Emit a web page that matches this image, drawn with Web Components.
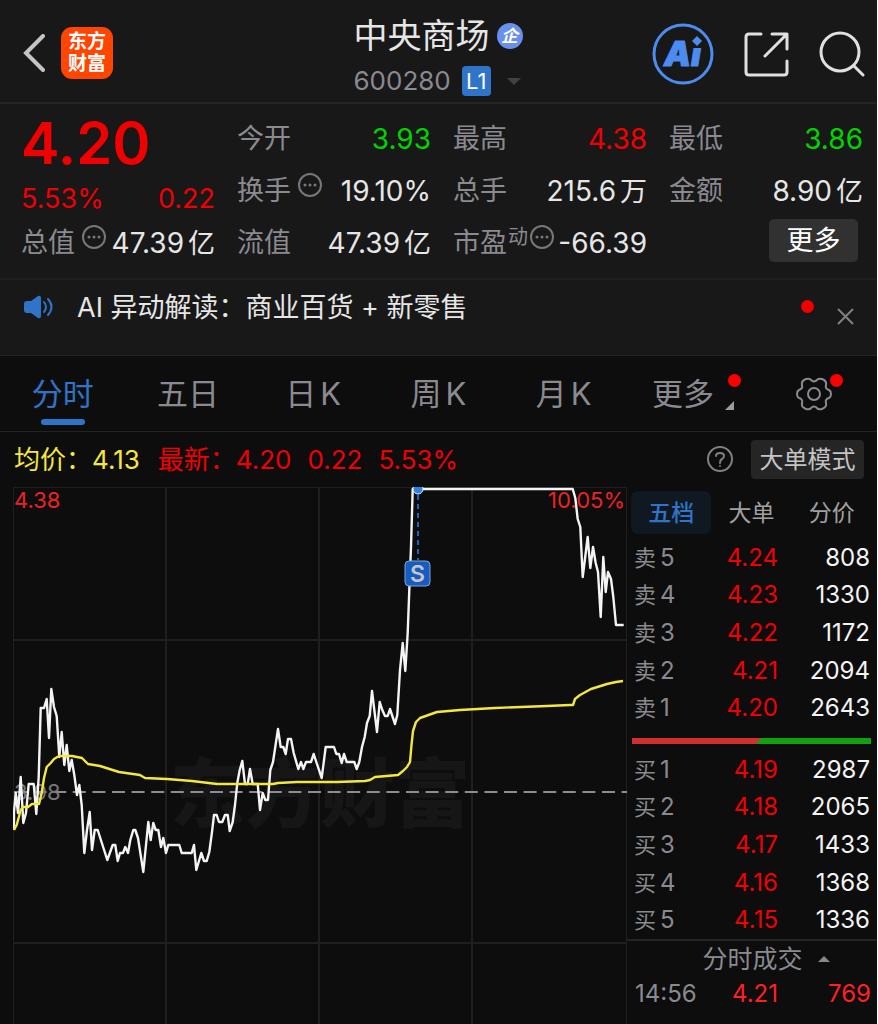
<!DOCTYPE html>
<html lang="zh-CN">
<head>
<meta charset="utf-8">
<meta name="viewport" content="width=device-width, initial-scale=1">
<title>中央商场 600280</title>
<style>
	:root {
		--panel: #181818;
		--page: #0d0d0d;
		--line: #242424;
		--label: #8a8a90;
		--text: #e6e6e6;
		--up: #f00000;
		--down: #00d400;
		--blue: #2f74c8;
	}

	body {
		margin: 0;
		background: var(--page);
		color: var(--text);
		font-family: Inter, "Noto Sans CJK SC", sans-serif;
	}
</style>
</head>
<body>
<stock-app></stock-app>

<script>
const BASE = /*html*/`
<style>
	* {
		box-sizing: border-box;
	}
	button {
		font: inherit;
		color: inherit;
		background: none;
		border: 0;
		padding: 0;
		cursor: pointer;
		white-space: nowrap;
	}
	svg {
		display: block;
		flex: none;
	}
	.up { color: var(--up); }
	.down { color: var(--down); }
	.unit { margin-left: 4px; }
</style>`

class BaseElement extends HTMLElement {
	constructor() {
		super()
		this.attachShadow({mode:'open'})
		this.shadowRoot.innerHTML = BASE + this.render()
	}
}

customElements.define('stock-header', class extends BaseElement {
	render() {
		return /*html*/`
<style>
	:host {
		display: grid;
		grid-template-columns: 1fr auto 1fr;
		align-items: center;
		height: 104px;
		padding: 0 12px 0 23px;
		background: var(--panel);
		border-bottom: 2px solid var(--line);
	}
	.left, .right, .row {
		display: flex;
		align-items: center;
	}
	.left { gap: 16px; padding-top: 4px; }
	.right { gap: 30px; justify-content: flex-end; padding-top: 6px; }
	.logo {
		display: grid;
		align-content: center;
		width: 52px;
		height: 52px;
		border-radius: 11px;
		background: #ff4500;
		color: #fff;
		font-size: 19px;
		line-height: 22px;
		font-weight: 700;
		text-align: center;
		text-decoration: none;
	}
	.name { padding: 8px 12px 0 0; }
	h1 {
		margin: 0;
		font-size: 34px;
		line-height: 44px;
		font-weight: 400;
	}
	.row { gap: 7px; }
	.code {
		gap: 11px;
		margin-top: 8px;
		color: var(--label);
		font-size: 26px;
		line-height: 30px;
	}
	.corp {
		width: 26px;
		height: 26px;
		border-radius: 50%;
		background: #6a90ee;
		color: #fff;
		font-size: 17px;
		line-height: 26px;
		font-weight: 700;
		font-style: italic;
		text-align: center;
	}
	.level {
		width: 29px;
		height: 30px;
		border-radius: 4px;
		background: var(--blue);
		color: #fff;
		font-size: 22px;
		text-align: center;
	}
	.caret {
		margin-left: 5px;
		border: 7px solid transparent;
		border-top-color: #424242;
		border-bottom: 0;
	}
</style>
<div class="left">
	<button aria-label="返回">
		<svg width="22" height="38" viewBox="0 0 22 38" fill="none" stroke="#c4c4c6" stroke-width="4" stroke-linecap="round"><path d="M20 2L3 19L20 36"/></svg>
	</button>
	<a class="logo" href="#"><span>东方</span><span>财富</span></a>
</div>
<div class="name">
	<div class="row"><h1>中央商场</h1><span class="corp">企</span></div>
	<div class="row code"><span>600280</span><span class="level">L1</span><i class="caret"></i></div>
</div>
<div class="right">
	<button aria-label="智能助手">
		<svg width="62" height="62" viewBox="0 0 62 62">
			<circle cx="31" cy="31" r="29" fill="none" stroke="#4c8bf0" stroke-width="3"/>
			<text x="12" y="43" font-size="34" font-weight="900" font-style="italic" fill="#4c8bf0" stroke="#4c8bf0" stroke-linejoin="round">Ai</text>
			<path d="M39 13L50 14L52 25H38Z" fill="#181818"/>
			<path d="M45 13L50 18L45 23L40 18Z" fill="#4c8bf0"/>
		</svg>
	</button>
	<button aria-label="分享">
		<svg width="45" height="45" viewBox="0 0 45 45" fill="none" stroke="#e0e0e0" stroke-width="3" stroke-linecap="round" stroke-linejoin="round"><path d="M17 2H5Q2 2 2 5V40Q2 43 5 43H40Q43 43 43 40V29M28 2H43V17M43 2L21 24"/></svg>
	</button>
	<button aria-label="搜索">
		<svg width="46" height="46" viewBox="0 0 46 46" fill="none" stroke="#e0e0e0" stroke-width="3" stroke-linecap="round"><circle cx="21" cy="21" r="19"/><path d="M35 35L44 44"/></svg>
	</button>
</div>`
	}
})

customElements.define('more-dots', class extends BaseElement {
	render() {
		return /*html*/`
<style>
	:host {
		display: block;
		margin-bottom: 12px;
	}
</style>
<svg width="24" height="24" viewBox="0 0 24 24" fill="#77777b">
	<circle cx="12" cy="12" r="11" fill="none" stroke="#77777b" stroke-width="2"/>
	<circle cx="7" cy="12" r="1.5"/><circle cx="12" cy="12" r="1.5"/><circle cx="17" cy="12" r="1.5"/>
</svg>`
	}
})

// label (slot "label"), optional icon (slot "icon"), value in the default slot
customElements.define('quote-cell', class extends BaseElement {
	render() {
		return /*html*/`
<style>
	:host {
		display: flex;
		align-items: center;
		height: 52px;
		white-space: nowrap;
	}
	:host([short]) { height: 36px; }
	.label { color: var(--label); }
	.icon { display: flex; margin-left: 7px; }
	:host([tight]) .icon { margin-left: 1px; }
	.value { margin-left: auto; font-size: 28px; }
</style>
<span class="label"><slot name="label"></slot></span>
<span class="icon"><slot name="icon"></slot></span>
<span class="value"><slot></slot></span>`
	}
})

customElements.define('stock-quote', class extends BaseElement {
	render() {
		return /*html*/`
<style>
	:host {
		display: grid;
		grid-template-columns: repeat(4, 1fr);
		column-gap: 22px;
		height: 174px;
		padding: 9px 14px 0 21px;
		background: var(--panel);
		font-size: 27px;
		line-height: 36px;
	}
	.price {
		font-size: 58px;
		line-height: 60px;
		font-weight: 600;
	}
	.change {
		display: flex;
		justify-content: space-between;
		align-items: center;
		height: 52px;
	}
	.unit { font-size: 27px; }
	.dynamic {
		margin: 0 2px 12px 0;
		font-size: 20px;
		line-height: 24px;
		color: var(--label);
	}
	.more {
		display: block;
		width: 89px;
		height: 43px;
		margin: 2px 5px 0 auto;
		border-radius: 5px;
		background: #313131;
		color: #fff;
	}
</style>
<div>
	<div class="price up">4.20</div>
	<div class="change up"><span>5.53%</span><span>0.22</span></div>
	<quote-cell short><span slot="label">总值</span><more-dots slot="icon"></more-dots>47.39<span class="unit">亿</span></quote-cell>
</div>
<div>
	<quote-cell><span slot="label">今开</span><span class="down">3.93</span></quote-cell>
	<quote-cell><span slot="label">换手</span><more-dots slot="icon"></more-dots>19.10%</quote-cell>
	<quote-cell><span slot="label">流值</span>47.39<span class="unit">亿</span></quote-cell>
</div>
<div>
	<quote-cell><span slot="label">最高</span><span class="up">4.38</span></quote-cell>
	<quote-cell><span slot="label">总手</span>215.6<span class="unit">万</span></quote-cell>
	<quote-cell tight><span slot="label">市盈</span><span slot="icon" class="dynamic">动</span><more-dots slot="icon"></more-dots>-66.39</quote-cell>
</div>
<div>
	<quote-cell><span slot="label">最低</span><span class="down">3.86</span></quote-cell>
	<quote-cell><span slot="label">金额</span>8.90<span class="unit">亿</span></quote-cell>
	<button class="more">更多</button>
</div>`
	}
})

customElements.define('news-bar', class extends BaseElement {
	render() {
		return /*html*/`
<style>
	:host {
		display: flex;
		align-items: flex-start;
		height: 78px;
		padding: 10px 23px 0 24px;
		background: var(--panel);
		border-top: 2px solid #202020;
		border-bottom: 1px solid var(--line);
		font-size: 27px;
		line-height: 36px;
	}
	.speaker { margin: 5px 24px 0 0; }
	.dot {
		width: 13px;
		height: 13px;
		margin: 10px 23px 0 auto;
		border-radius: 50%;
		background: #f00000;
	}
	.close { margin-top: 18px; }
</style>
<svg class="speaker" width="29" height="24" viewBox="0 0 29 24" fill="#2f74c8">
	<path d="M3 6H7L14 1Q17 0 17 3V21Q17 24 14 23L7 18H3Q0 18 0 15V9Q0 6 3 6Z"/>
	<path d="M20 7Q24 12 20 17M24 4Q31 12 24 20" fill="none" stroke="#2f74c8" stroke-width="2" stroke-linecap="round"/>
</svg>
<span><slot></slot></span>
<i class="dot"></i>
<button class="close" aria-label="关闭">
	<svg width="17" height="17" viewBox="0 0 17 17" stroke="#808080" stroke-width="2"><path d="M1 1L16 16M16 1L1 16"/></svg>
</button>`
	}
})

customElements.define('period-tabs', class extends BaseElement {
	render() {
		return /*html*/`
<style>
	:host {
		display: grid;
		grid-template-columns: repeat(7, 1fr);
		height: 76px;
		border-bottom: 1px solid var(--line);
		color: var(--label);
		font-size: 31px;
		line-height: 40px;
	}
	button {
		display: flex;
		justify-content: center;
		align-items: center;
	}
	.tab {
		position: relative;
	}
	.on { color: var(--blue); }
	.on .tab::after {
		content: "";
		position: absolute;
		left: 9px;
		right: 9px;
		bottom: -11px;
		height: 6px;
		border-radius: 4px;
		background: var(--blue);
	}
	.more { padding-right: 12px; }
	.dot {
		position: absolute;
		right: -27px;
		top: 0;
		width: 13px;
		height: 13px;
		border-radius: 50%;
		background: #f00;
	}
	.set .dot { right: -11px; top: -3px; }
	.corner {
		position: absolute;
		right: -20px;
		bottom: 4px;
		border-left: 9px solid transparent;
		border-bottom: 9px solid #9a9aa0;
	}
</style>
<button class="on"><span class="tab">分时</span></button>
<button><span class="tab">五日</span></button>
<button><span class="tab">日<span class="unit">K</span></span></button>
<button><span class="tab">周<span class="unit">K</span></span></button>
<button><span class="tab">月<span class="unit">K</span></span></button>
<button class="more"><span class="tab">更多<i class="dot"></i><i class="corner"></i></span></button>
<button class="set" aria-label="设置"><span class="tab">
	<svg width="36" height="34" viewBox="0 0 36 34" fill="none" stroke="#8a8a90" stroke-width="2">
		<path d="M10 2Q14 1 15 3Q18 6 21 3Q22 1 26 2Q31 4 30 8Q29 12 33 13Q35 14 35 17Q35 20 33 21Q29 22 30 26Q31 30 26 32Q22 33 21 31Q18 28 15 31Q14 33 10 32Q5 30 6 26Q7 22 3 21Q1 20 1 17Q1 14 3 13Q7 12 6 8Q5 4 10 2Z"/>
		<circle cx="18" cy="17" r="6"/>
	</svg>
	<i class="dot"></i>
</span></button>`
	}
})

customElements.define('price-info', class extends BaseElement {
	render() {
		return /*html*/`
<style>
	:host {
		display: flex;
		align-items: center;
		height: 55px;
		padding: 0 13px 0 14px;
		font-size: 26px;
		line-height: 36px;
		white-space: nowrap;
	}
	.avg { color: #f5e83c; margin-right: 18px; }
	.last { display: flex; gap: 16px; }
	.help { margin-left: auto; }
	.mode {
		width: 113px;
		height: 39px;
		margin-left: 17px;
		border-radius: 4px;
		background: #252525;
		color: #c4c4c4;
		font-size: 24px;
	}
</style>
<span class="avg">均价：4.13</span>
<span class="last up"><span>最新：4.20</span><span>0.22</span><span>5.53%</span></span>
<button class="help" aria-label="说明">
	<svg width="27" height="27" viewBox="0 0 27 27" fill="none" stroke="#808084" stroke-width="2" stroke-linecap="round">
		<circle cx="13" cy="13" r="12"/>
		<path d="M9 10Q9 7 13 7Q17 7 17 10Q17 12 15 13Q13 14 13 17M13 20V20"/>
	</svg>
</button>
<button class="mode">大单模式</button>`
	}
})

const PRICE = `14,830 14,812 15.7,793 18,813 20.7,777 23.3,823 26,813 28.7,784 33.7,784 36.3,814 38.7,777 40.7,708 44,708 46.7,699
	49,738 51.3,689 54,707 56.7,716 59.3,757 61.7,732 64.3,765 66.7,745 69.3,771 71.7,760 74.3,775 77,795 79.3,785 81.7,805
	84.3,853 87,830 89.7,812 92,850 94.7,830 97.7,830 107.3,860 112.7,845 115.3,845 117.7,861 120,853 123,853 125.3,847
	128,853 130.3,840 133.3,830 135.3,830 138,838 143.3,872 148.3,822 150.7,840 153.3,823 155.7,830 158.3,830 161,847
	163.3,838 166,853 168.3,845 179.3,845 181.7,853 191.7,853 194,845 196.3,870 201.3,853 204,861 206.7,861 209.3,852
	212,832 214,815 216.7,815 219,822 222.3,822 225,815 227.7,815 229.7,831 232.7,822 235,805 237.3,783 239.7,770 242.3,761
	245,784 247.7,784 250,769 252.7,784 257.7,784 260,810 262.7,793 265.3,800 268,800 270.3,770 273,762 278,729 280.7,747
	283.3,747 285.7,754 288,739 291,739 293.7,753 298.3,769 301,762 303.3,769 306,762 311,762 313.7,754 316.3,762 321.7,778
	325.7,747 334,747 336.3,754 339,754 341.7,763 344,754 346.7,762 354.3,762 356.7,769 359.3,762 362,747 364.7,737 367,723
	369.7,716 372,691 377,732 379.7,702 382.3,710 385,716 387.7,716 390,709 395,724 397.3,715 400,670 402.7,643 405.3,671
	407.7,633 409.3,590 411,547 412.7,489 572.7,489 575.3,498 577.7,519 580.3,527 582.7,577 587.7,537 590.3,568 593,547
	595.7,563 598,572 600.7,617 603.3,557 605.7,592 608,572 611,579 613.3,597 616,625 623.7,625`

const AVERAGE = `14,830 16.7,825 20.7,810 23,807 28,807 32,804 39,804 41.7,793 44,778 46.7,767 50.7,763 54,759 59,756 72,756 82,758
	88,764 100,766 119,772 140,775 145,778 167,779 192,781 217,784 273,784 278,783 297,782 337,782 365,781 370,780 375,777
	398,775 403,771 407,767 410,762 411.5,745 413,731 416,722 420,718 437,712 460,710 495,708 547,706 570,705 573,705
	575,699 580,695 591,689 607,684 616,682 623,681`

customElements.define('minute-chart', class extends BaseElement {
	render() {
		return /*html*/`
<style>
	:host {
		display: block;
	}
	svg {
		width: 100%;
		height: auto;
	}
	.grid { stroke: #1f1f1f; stroke-width: 2; }
	.tick { font-size: 22px; }
	.mark { font-size: 75px; font-weight: 900; fill: #161616; }
	polyline { fill: none; stroke-width: 2.4; stroke-linejoin: round; }
</style>
<svg viewBox="13 487 614 537">
	<text class="mark" x="170" y="821">东方财富</text>
	<path class="grid" d="M13 487H627M13 640H627M13 943H627M13 487V1024M166 487V1024M319 487V1024M472 487V1024M627 487V1024"/>
	<path d="M14 792H627" stroke="#8c8c94" stroke-width="2" stroke-dasharray="13 6.6"/>
	<text class="tick" x="14" y="800" fill="#77777c">3.98</text>
	<polyline points="${PRICE}" stroke="#f4f4f4"/>
	<polyline points="${AVERAGE}" stroke="#f5e83c"/>
	<text class="tick" x="14" y="508" fill="#ee2222">4.38</text>
	<text class="tick" x="625" y="508" fill="#ee2222" text-anchor="end">10.05%</text>
	<path d="M418 495V560" stroke="#1c62bf" stroke-width="2" stroke-dasharray="5 4"/>
	<circle cx="418" cy="489" r="5" fill="#2f7fe6" stroke="#e8f0fa" stroke-width="1"/>
	<rect x="405" y="561" width="25" height="25" rx="4" fill="#175cc0" stroke="#7fa6da"/>
	<text x="417.5" y="582" font-size="23" font-weight="600" fill="#c6c6c8" text-anchor="middle">S</text>
</svg>`
	}
})

const SELL = [[5, '4.24', 808], [4, '4.23', 1330], [3, '4.22', 1172], [2, '4.21', 2094], [1, '4.20', 2643]]
const BUY = [[1, '4.19', 2987], [2, '4.18', 2065], [3, '4.17', 1433], [4, '4.16', 1368], [5, '4.15', 1336]]

customElements.define('order-book', class extends BaseElement {
	rows(side, list) {
		return list
			.map(([level, price, count]) => /*html*/`
				<tr><th><span class="side">${side}</span><span class="unit">${level}</span></th><td class="up">${price}</td><td>${count}</td></tr>`)
			.join('')
	}

	render() {
		return /*html*/`
<style>
	:host {
		display: block;
		font-size: 24px;
		line-height: 32px;
	}
	.tabs {
		display: grid;
		grid-template-columns: repeat(3, 1fr);
		height: 52px;
		margin-right: 5px;
		padding: 4px 0 5px 4px;
		font-size: 23px;
		color: #a0a0a0;
	}
	.tabs .on {
		border-radius: 7px;
		background: #101922;
		color: var(--blue);
		font-weight: 500;
	}
	table {
		width: 100%;
		height: 188px;
		border-collapse: collapse;
		table-layout: fixed;
		color: #f4f4f4;
	}
	th, td {
		padding: 0;
		text-align: right;
		white-space: nowrap;
	}
	th {
		width: 76px;
		padding-left: 7px;
		text-align: left;
		font-weight: 400;
		color: var(--label);
	}
	.side { font-size: 22px; }
	td:nth-child(2) { width: 75px; }
	td:last-child { padding-right: 7px; }
	.bar {
		height: 6px;
		margin: 11px 6px 7px 5px;
		background: linear-gradient(135deg, #d03030 53%, #12a012 53%);
	}
	.title {
		display: flex;
		justify-content: center;
		align-items: center;
		gap: 15px;
		width: 100%;
		height: 37px;
		padding-left: 28px;
		border-top: 2px solid var(--line);
		font-size: 25px;
		color: var(--label);
	}
	.title i {
		border: 6px solid transparent;
		border-bottom-color: #88888c;
		border-top: 0;
	}
	.deals {
		height: 36px;
		color: #ff2020;
	}
	.deals th { padding-left: 8px; }
	.deals .up { color: #ff2020; }
	.deals td:last-child { padding-right: 6px; }
</style>
<div class="tabs">
	<button class="on">五档</button>
	<button>大单</button>
	<button>分价</button>
</div>
<table>${this.rows('卖', SELL)}</table>
<div class="bar"></div>
<table>${this.rows('买', BUY)}</table>
<button class="title">分时成交<i></i></button>
<table class="deals"><tr><th>14:56</th><td class="up">4.21</td><td>769</td></tr></table>`
	}
})

customElements.define('stock-app', class extends BaseElement {
	render() {
		return /*html*/`
<style>
	:host {
		display: block;
		border-right: 1px solid #fff;
	}
	main {
		display: grid;
		grid-template-columns: 1fr 250px;
		padding-left: 13px;
	}
</style>
<stock-header></stock-header>
<stock-quote></stock-quote>
<news-bar>AI 异动解读：商业百货 + 新零售</news-bar>
<period-tabs></period-tabs>
<price-info></price-info>
<main>
	<minute-chart></minute-chart>
	<order-book></order-book>
</main>`
	}
})
</script>
</body>
</html>
